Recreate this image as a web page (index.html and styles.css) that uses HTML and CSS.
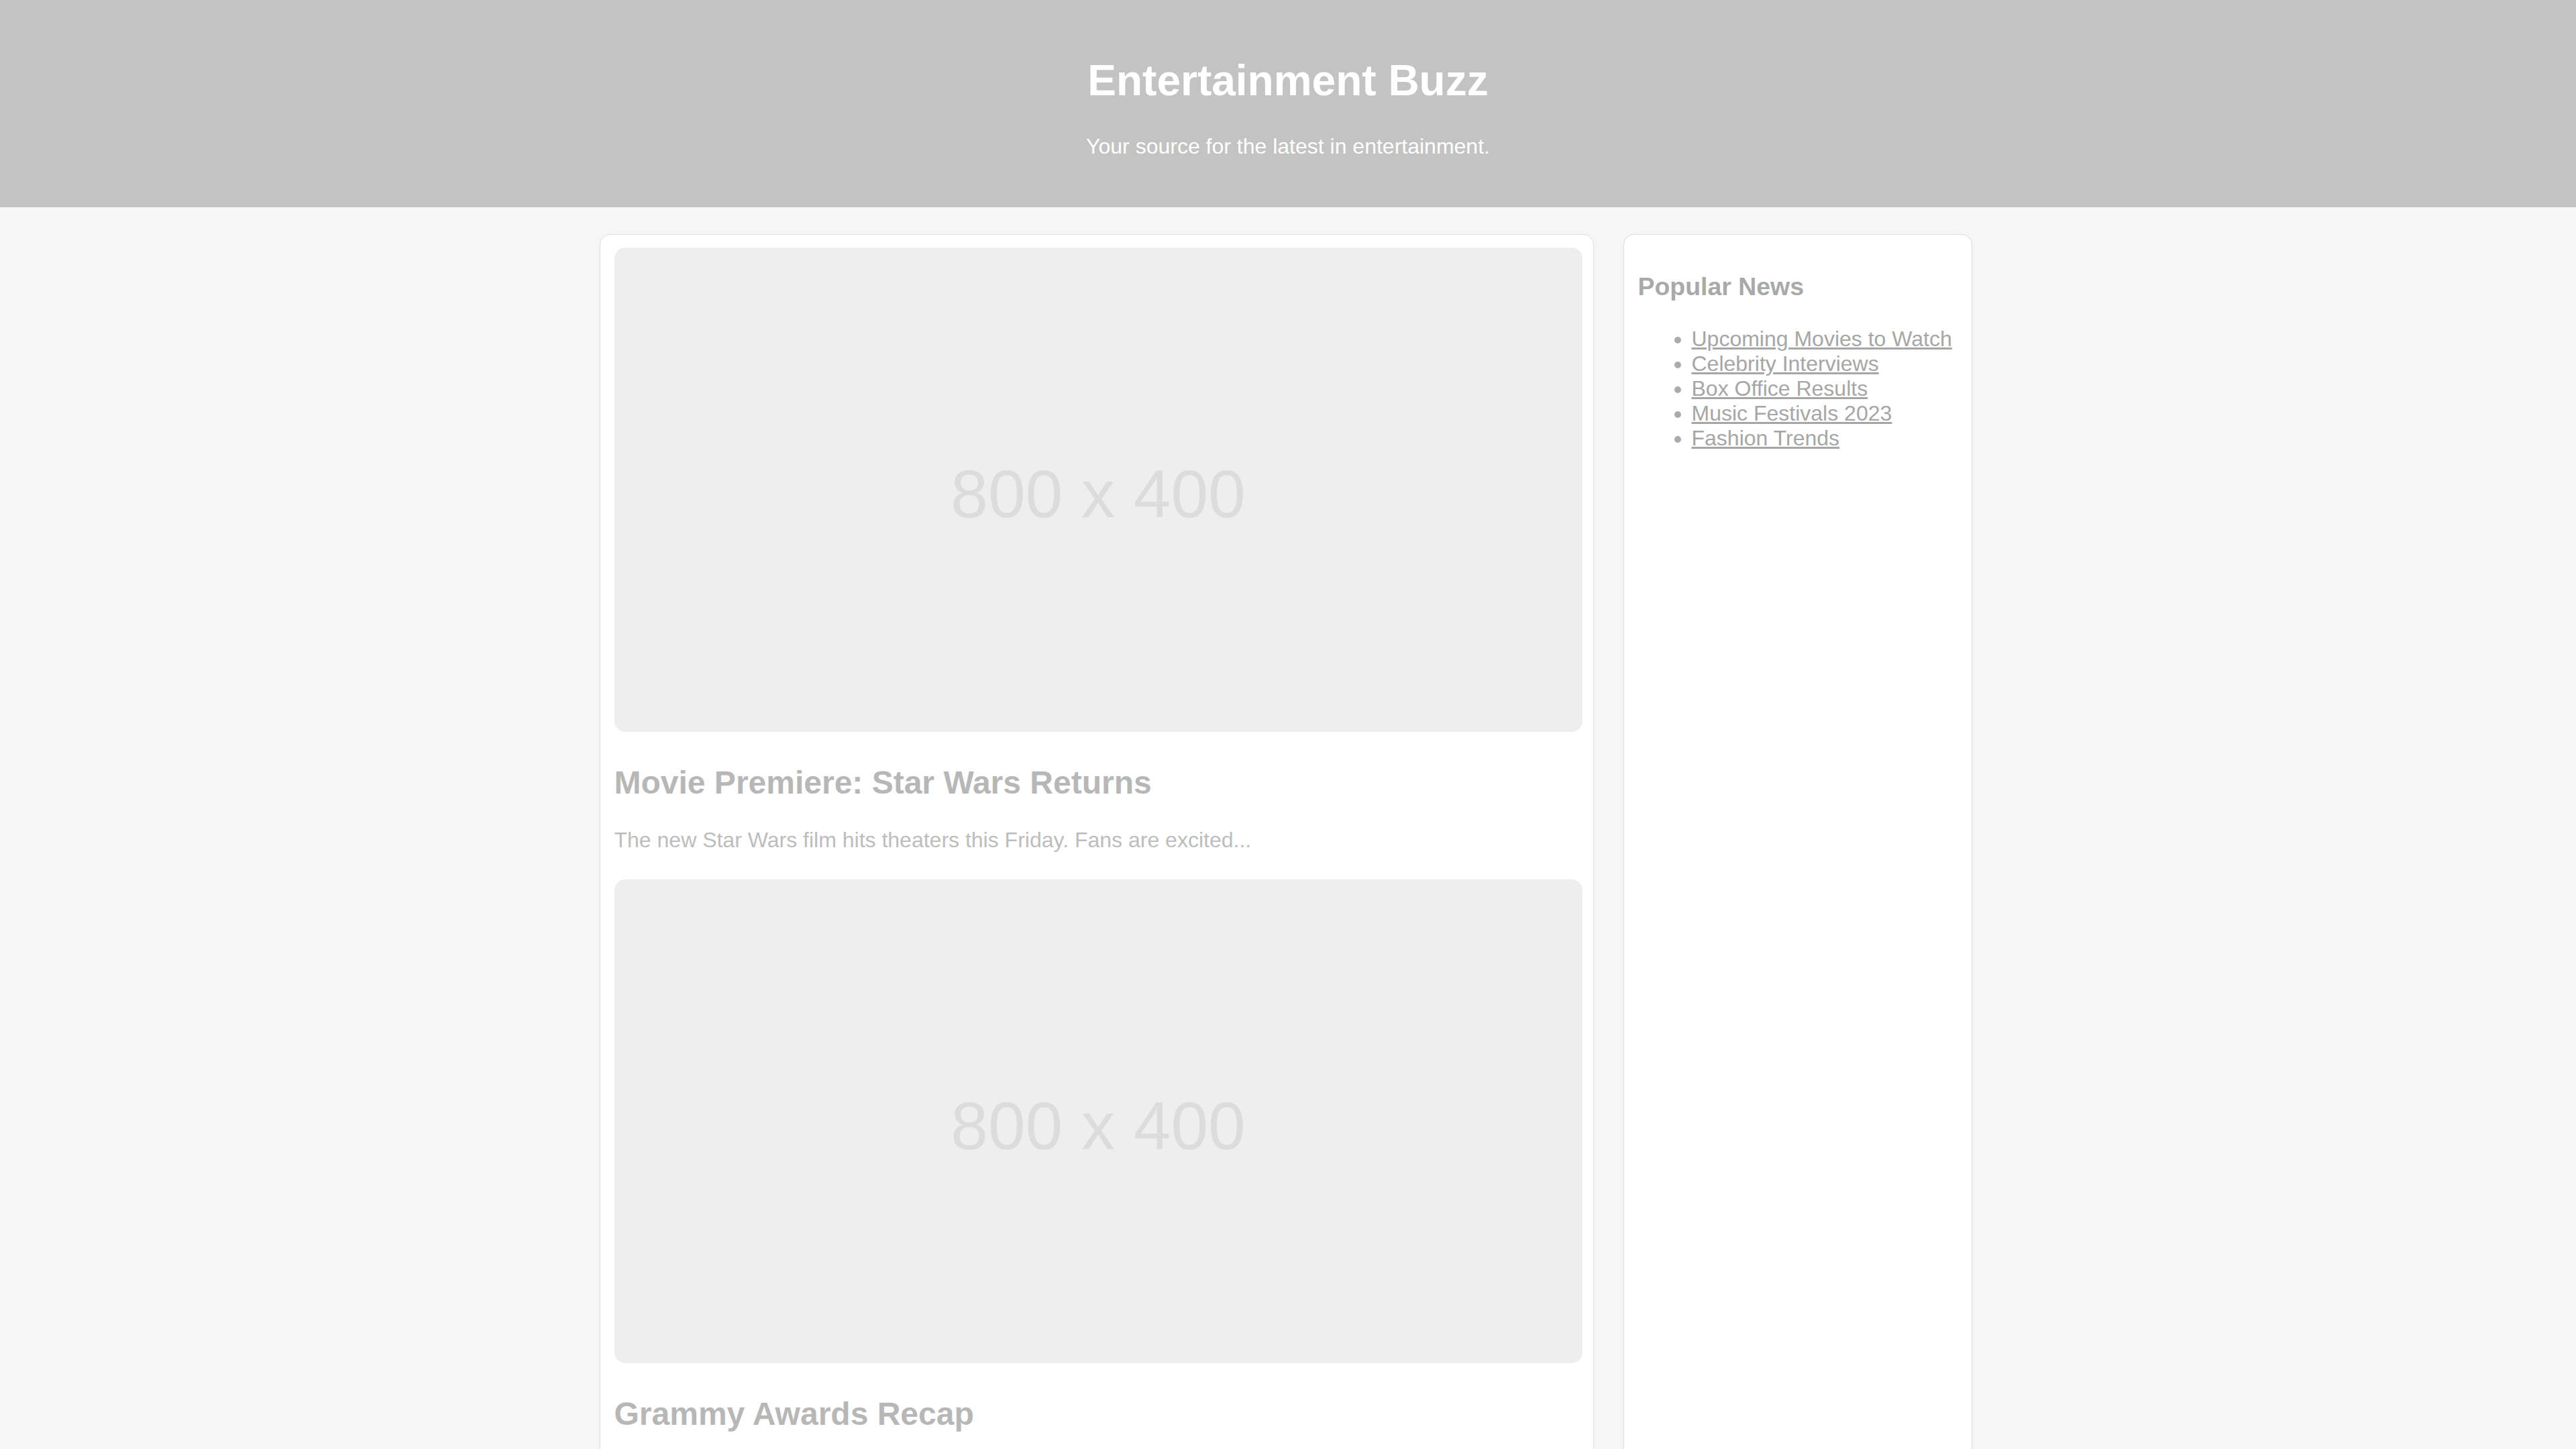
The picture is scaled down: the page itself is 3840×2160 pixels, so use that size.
FILE: index.html
```html
<!DOCTYPE html>
<html lang="en">
<head>
<meta charset="utf-8">
<title>Entertainment Buzz</title>
<link rel="stylesheet" href="styles.css">
</head>
<body>
<header class="site-header">
  <h1 class="site-title">Entertainment Buzz</h1>
  <p class="site-tagline">Your source for the latest in entertainment.</p>
</header>
<div class="layout">
  <main class="feed">
    <article class="post">
      <div class="post-image">800 x 400</div>
      <h2 class="post-title">Movie Premiere: Star Wars Returns</h2>
      <p class="post-excerpt">The new Star Wars film hits theaters this Friday. Fans are excited...</p>
    </article>
    <article class="post">
      <div class="post-image">800 x 400</div>
      <h2 class="post-title">Grammy Awards Recap</h2>
      <p class="post-excerpt">A look back at the biggest winners and the best performances of the night...</p>
    </article>
  </main>
  <aside class="sidebar">
    <h3 class="sidebar-title">Popular News</h3>
    <ul class="popular-list">
      <li><a href="#">Upcoming Movies to Watch</a></li>
      <li><a href="#">Celebrity Interviews</a></li>
      <li><a href="#">Box Office Results</a></li>
      <li><a href="#">Music Festivals 2023</a></li>
      <li><a href="#">Fashion Trends</a></li>
    </ul>
  </aside>
</div>
</body>
</html>
```

FILE: styles.css
```css
html, body {
  margin: 0;
  padding: 0;
}

body {
  background: #f7f7f7;
  font-family: "Liberation Sans", Arial, sans-serif;
  font-size: 32px;
}

.site-header {
  background: #c3c3c3;
  color: #ffffff;
  text-align: center;
  padding: 40px;
}

.site-title {
  font-size: 64px;
  font-weight: bold;
  margin: 43px 0;
}

.site-tagline {
  font-size: 32px;
  margin: 32px 0;
}

.layout {
  width: 2053px;
  box-sizing: border-box;
  padding-right: 7px;
  margin: 40px auto;
  display: flex;
  gap: 44px;
  align-items: stretch;
}

.feed {
  flex: 1;
  background: #ffffff;
  border: 1px solid #dedede;
  border-radius: 16px;
  padding: 19px 16px 21px 21px;
  box-shadow: 0 0 12px rgba(0, 0, 0, 0.03);
}

.post-image {
  aspect-ratio: 2 / 1;
  box-sizing: border-box;
  padding-top: 14px;
  background: #eeeeee;
  border-radius: 16px;
  display: flex;
  align-items: center;
  justify-content: center;
  color: #dcdcdc;
  font-size: 100px;
}

.post-title {
  font-size: 48px;
  font-weight: bold;
  color: #b7b7b7;
  margin: 48px 0 40px;
}

.post-excerpt {
  font-size: 32px;
  color: #bdbdbd;
  margin: 0 0 40px;
}

.sidebar {
  width: 520px;
  flex-shrink: 0;
  box-sizing: border-box;
  background: #ffffff;
  border: 1px solid #dedede;
  border-radius: 16px;
  padding: 19px 21px 21px;
  box-shadow: 0 0 12px rgba(0, 0, 0, 0.03);
}

.sidebar-title {
  font-size: 37.44px;
  font-weight: bold;
  color: #a9a9a9;
  margin: 37.44px 0;
}

.popular-list {
  margin: 32px 0;
  padding-left: 80px;
  color: #ababab;
}

.popular-list a {
  color: #a6a6a6;
  text-decoration: underline;
}
```
